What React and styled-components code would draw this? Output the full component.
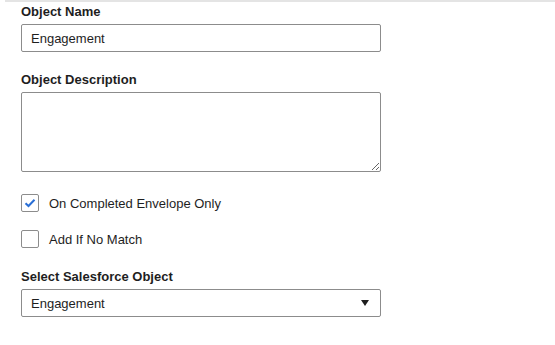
import styled, { createGlobalStyle } from "styled-components"

const GlobalStyle = createGlobalStyle`
  body {
    margin: 0;
    background: #fff;
    font-family: "Liberation Sans", Arial, sans-serif;
    color: #1e1e1e;
  }
`

const Page = styled.div`
  border-top: 2px solid #e4e4e4;
  margin-left: 5px;
  padding: 2px 0 0 16px;
`

const Form = styled.div`
  width: 360px;
`

const Field = styled.div`
  display: flex;
  flex-direction: column;
  gap: 5px;
  margin-bottom: ${(p) => p.$gap || 20}px;
`

const Label = styled.label`
  font-size: 13px;
  font-weight: 700;
  line-height: 15px;
  color: #1e1e1e;
`

const TextInput = styled.input`
  box-sizing: border-box;
  width: 360px;
  height: 28px;
  border: 1px solid #8c8c8c;
  border-radius: 2px;
  padding: 0 9px;
  font-family: inherit;
  font-size: 13px;
  color: #1e1e1e;
  outline: none;
`

const TextArea = styled.textarea`
  box-sizing: border-box;
  width: 360px;
  height: 80px;
  border: 1px solid #8c8c8c;
  border-radius: 2px;
  font-family: inherit;
  font-size: 13px;
  resize: vertical;
  outline: none;
  display: block;
`

const CheckRow = styled.label`
  display: flex;
  align-items: center;
  gap: 10px;
  height: 18px;
  margin-bottom: ${(p) => p.$gap || 18}px;
  font-size: 13px;
  color: #1e1e1e;
`

const Box = styled.span`
  box-sizing: border-box;
  width: 18px;
  height: 18px;
  border: 1px solid #8c8c8c;
  border-radius: 2px;
  display: flex;
  align-items: center;
  justify-content: center;
  background: #fff;
`

const SelectBox = styled.div`
  box-sizing: border-box;
  width: 360px;
  height: 28px;
  border: 1px solid #8c8c8c;
  border-radius: 2px;
  padding: 0 9px 0 9px;
  display: flex;
  align-items: center;
  justify-content: space-between;
  font-size: 13px;
  color: #1e1e1e;
`

const Caret = styled.span`
  width: 0;
  height: 0;
  border-left: 4px solid transparent;
  border-right: 4px solid transparent;
  border-top: 6px solid #1e1e1e;
  margin-right: 2px;
`

function Checkbox({ checked, children, gap }) {
  return (
    <CheckRow $gap={gap}>
      <Box>
        {checked && (
          <svg width="12" height="10" viewBox="0 0 12 10">
            <path d="M1.5 5.2 L4.5 8 L10.5 1.8" fill="none" stroke="#2a6fd6" strokeWidth="2" />
          </svg>
        )}
      </Box>
      {children}
    </CheckRow>
  )
}

export default function App() {
  return (
    <>
      <GlobalStyle />
      <Page>
        <Form>
          <Field>
            <Label>Object Name</Label>
            <TextInput defaultValue="Engagement" />
          </Field>
          <Field $gap={22}>
            <Label>Object Description</Label>
            <TextArea />
          </Field>
          <Checkbox checked>On Completed Envelope Only</Checkbox>
          <Checkbox gap={21}>Add If No Match</Checkbox>
          <Field>
            <Label>Select Salesforce Object</Label>
            <SelectBox>
              Engagement
              <Caret />
            </SelectBox>
          </Field>
        </Form>
      </Page>
    </>
  )
}
